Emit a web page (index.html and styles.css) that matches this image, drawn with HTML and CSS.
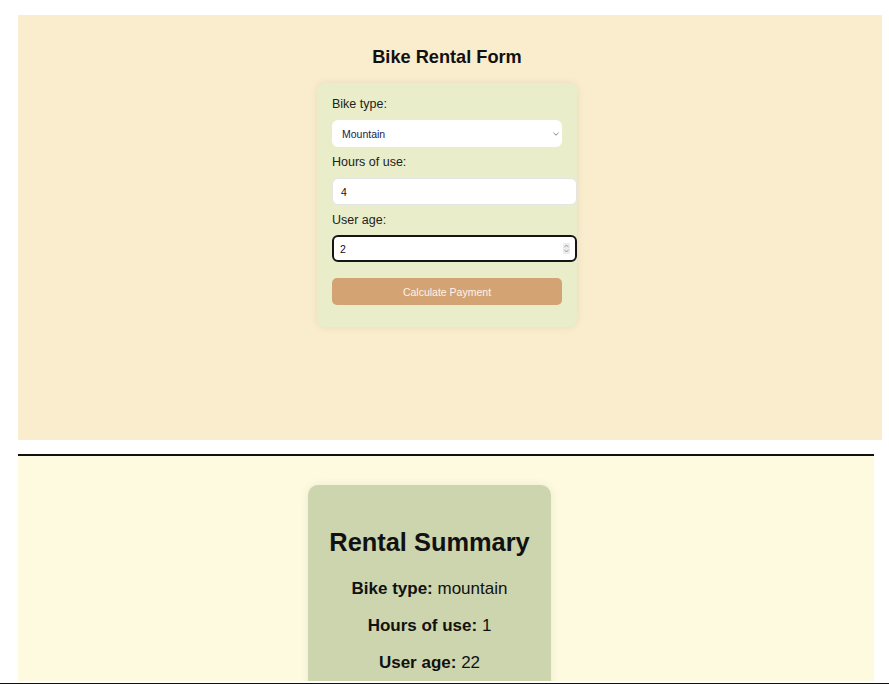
FILE: index.html
```html
<!DOCTYPE html>
<html>
<head>
<meta charset="utf-8">
<link rel="stylesheet" href="styles.css">
</head>
<body>
<div class="page">
  <section class="form-section">
    <h1 class="form-title">Bike Rental Form</h1>
    <form class="form-card">
      <label class="field-label">Bike type:</label>
      <div class="select-wrap">
        <select class="field-select">
          <option>Mountain</option>
        </select>
        <svg class="select-chevron" width="6" height="4" viewBox="0 0 6 4"><path d="M0.5 0.8 L3 3.2 L5.5 0.8" fill="none" stroke="#777" stroke-width="0.9"/></svg>
      </div>
      <label class="field-label">Hours of use:</label>
      <input class="field-input" type="text" value="4">
      <label class="field-label">User age:</label>
      <div class="input-wrap">
        <input class="field-input focused" type="text" value="2">
        <svg class="spinner" width="7" height="11" viewBox="0 0 7 11"><rect x="0" y="0" width="7" height="11" rx="1" fill="#ececec"/><path d="M1.5 4.2 L3.5 2 L5.5 4.2 M1.5 6.8 L3.5 9 L5.5 6.8" fill="none" stroke="#8a8a8a" stroke-width="0.8"/></svg>
      </div>
      <button class="calc-btn" type="button">Calculate Payment</button>
    </form>
  </section>
  <section class="summary-section">
    <div class="summary-card">
      <h2 class="summary-title">Rental Summary</h2>
      <p class="summary-line"><strong>Bike type:</strong> mountain</p>
      <p class="summary-line"><strong>Hours of use:</strong> 1</p>
      <p class="summary-line"><strong>User age:</strong> 22</p>
    </div>
  </section>
</div>
<div class="bottom-rule"></div>
</body>
</html>
```
FILE: styles.css
```css
html, body {
  margin: 0;
  padding: 0;
  background: #ffffff;
  font-family: "Liberation Sans", Arial, sans-serif;
  overflow: hidden;
}
.page {
  padding: 15px 0 0 18px;
  height: 668px;
  overflow: hidden;
}
.form-section {
  width: 864px;
  height: 425px;
  background: #faedcd;
  display: flex;
  flex-direction: column;
  align-items: center;
  box-sizing: border-box;
  padding: 31px 6px 0 0;
}
.form-title {
  margin: 0 0 15px 0;
  font-size: 18.2px;
  font-weight: bold;
  color: #111;
  line-height: 22px;
}
.form-card {
  width: 230px;
  padding: 14px 15px 22px 15px;
  background: #e9edc9;
  border-radius: 8px;
  box-shadow: 0 0 8px rgba(0, 0, 0, 0.08);
  display: flex;
  flex-direction: column;
  align-items: flex-start;
}
.field-label {
  font-size: 12.5px;
  line-height: 15px;
  color: #222;
  margin-bottom: 8px;
}
.select-wrap {
  position: relative;
  width: 100%;
  margin-bottom: 8px;
}
.field-select {
  appearance: none;
  -webkit-appearance: none;
  width: 100%;
  height: 27px;
  border: none;
  border-radius: 6px;
  background: #ffffff;
  padding: 0 10px;
  font-family: "Liberation Sans", Arial, sans-serif;
  font-size: 10.5px;
  color: #1a1a50;
  display: block;
}
.select-chevron {
  position: absolute;
  right: 3px;
  top: 12px;
}
.field-input {
  height: 27px;
  box-sizing: border-box;
  width: 245px;
  border: 1px solid #e4e4e4;
  border-radius: 6px;
  background: #ffffff;
  padding: 0 8px;
  font-family: "Liberation Sans", Arial, sans-serif;
  font-size: 10.5px;
  color: #111;
  margin: 0 0 8px 0;
  display: block;
  outline: none;
}
.input-wrap {
  position: relative;
  margin-top: -1px;
  margin-bottom: 16px;
}
.input-wrap .field-input {
  margin-bottom: 0;
}
.field-input.focused {
  border: 2px solid #151515;
  padding: 0 6px;
}
.spinner {
  position: absolute;
  right: 7px;
  top: 8px;
}
.calc-btn {
  width: 100%;
  height: 27px;
  border: none;
  border-radius: 5px;
  background: #d4a373;
  color: #fdf3e8;
  font-family: "Liberation Sans", Arial, sans-serif;
  font-size: 10.5px;
}
.summary-section {
  margin-top: 14px;
  width: 856px;
  height: 227px;
  border-top: 2px solid #111;
  background: #fefae0;
  padding: 29px 0 0 290px;
  box-sizing: border-box;
  overflow: hidden;
}
.summary-card {
  width: 203px;
  padding: 20px;
  background: #ccd5ae;
  border-radius: 10px;
  box-shadow: 0 0 10px rgba(0, 0, 0, 0.07);
  text-align: center;
  color: #111;
}
.summary-title {
  font-size: 25.4px;
  font-weight: bold;
  white-space: nowrap;
  margin: 22px -10px 22px -10px;
  line-height: 30px;
}
.summary-line {
  font-size: 17px;
  margin: 17px 0;
}
.bottom-rule {
  height: 1px;
  background: #111;
  width: 100%;
}
```
